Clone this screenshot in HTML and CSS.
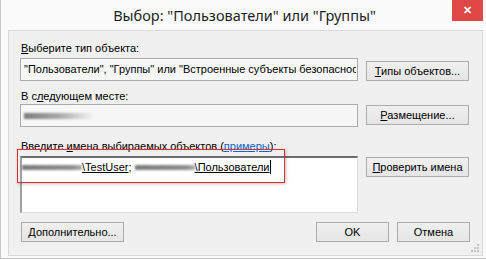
FILE: index.html
```html
<!DOCTYPE html>
<html lang="ru">
<head>
    <meta charset="UTF-8">
    <title>Выбор: "Пользователи" или "Группы"</title>
    <link rel="stylesheet" href="styles.css">
</head>
<body>

    <!-- Window -->
    <div class="window">
        <div class="titlebar">
            <span class="title">Выбор: "Пользователи" или "Группы"</span>
            <span class="close">&#10005;</span>
        </div>

        <div class="panel">
            <!-- Object type -->
            <div class="label"><u>В</u>ыберите тип объекта:</div>
            <div class="row row-field">
                <div class="field"><span class="field-text">"Пользователи", "Группы" или "Встроенные субъекты безопасности"</span></div>
                <button class="btn btn-side"><u>Т</u>ипы объектов...</button>
            </div>

            <!-- Location -->
            <div class="label label-loc">В с<u>л</u>едующем месте:</div>
            <div class="row row-field row-loc">
                <div class="field"><span class="smudge smudge-loc"></span></div>
                <button class="btn btn-side btn-loc"><u>Р</u>азмещение...</button>
            </div>

            <!-- Names -->
            <div class="label label-names">Введите <u>и</u>мена выбираемых объектов (<a href="#">примеры</a>):</div>
            <div class="row row-names">
                <div class="names">
                    <div class="names-line">
                        <span class="resolved"><span class="smudge"></span>\TestUser</span>; <span class="resolved"><span class="smudge"></span>\Пользователи</span><span class="caret"></span>
                    </div>
                </div>
                <button class="btn btn-side btn-check"><u>П</u>роверить имена</button>
            </div>

            <!-- Bottom buttons -->
            <div class="row row-bottom">
                <button class="btn btn-more"><u>Д</u>ополнительно...</button>
                <div class="spacer"></div>
                <button class="btn btn-ok">OK</button>
                <button class="btn btn-ok">Отмена</button>
            </div>

            <div class="highlight"></div>

            <svg class="grip" width="9" height="9" viewBox="0 0 9 9">
                <rect x="7" y="1" width="2" height="2" fill="#c4c4c4"/>
                <rect x="4" y="4" width="2" height="2" fill="#c4c4c4"/>
                <rect x="7" y="4" width="2" height="2" fill="#c4c4c4"/>
                <rect x="1" y="7" width="2" height="2" fill="#c4c4c4"/>
                <rect x="4" y="7" width="2" height="2" fill="#c4c4c4"/>
                <rect x="7" y="7" width="2" height="2" fill="#c4c4c4"/>
            </svg>
        </div>
    </div>

</body>
</html>
```

FILE: styles.css
```css
/* Reset */
* {
    margin: 0;
    padding: 0;
    box-sizing: border-box;
}

body {
    width: 486px;
    height: 259px;
    overflow: hidden;
    background: #fafafa;
    font-family: 'Liberation Sans', Arial, sans-serif;
    font-size: 11px;
    color: #000;
}

/* Window frame */
.window {
    width: 486px;
    height: 259px;
    border-left: 1px solid #c6c6c6;
    border-bottom: 1px solid #c6c6c6;
    background: #fafafa;
    display: flex;
    flex-direction: column;
}

.titlebar {
    position: relative;
    height: 30px;
    display: flex;
    align-items: center;
    justify-content: center;
    padding-left: 2px;
}

.title {
    font-family: 'Noto Sans', sans-serif;
    font-size: 14.5px;
    color: #1e1e1e;
    margin-top: -1px;
}

.close {
    position: absolute;
    top: 0;
    right: 3px;
    width: 31px;
    height: 21px;
    background: #e04848;
    color: #fff;
    font-size: 11px;
    font-weight: bold;
    display: flex;
    align-items: center;
    justify-content: center;
}

/* Client area */
.panel {
    position: relative;
    margin: 0 3px 2px 7px;
    flex: 1;
    background: #f0f0f0;
    border: 1px solid #d9d9d9;
    padding: 10px 12px 0 11px;
}

.label {
    height: 14px;
    line-height: 14px;
    padding-left: 1px;
}

.label-loc {
    margin-top: 8px;
}

.label-names {
    margin-top: 12px;
}

.label a {
    color: #0066cc;
    text-decoration: underline;
}

.row {
    display: flex;
    align-items: flex-start;
}

.row-field {
    margin-top: 3px;
}

.row-loc {
    margin-top: 1px;
}

.field {
    width: 338px;
    height: 23px;
    border: 1px solid #ababab;
    background: #f7f7f7;
    padding: 4px 0 0 3px;
    overflow: hidden;
}

.field-text {
    display: block;
    width: 332px;
    white-space: nowrap;
    overflow: hidden;
}

.btn {
    height: 20px;
    border: 1px solid #acacac;
    background: linear-gradient(#f0f0f0, #e5e5e5);
    font-family: 'Liberation Sans', Arial, sans-serif;
    font-size: 11px;
    color: #000;
    line-height: 18px;
}

.btn-side {
    width: 103px;
    margin-left: 8px;
    margin-top: 3px;
}

.btn-loc {
    margin-top: 1px;
}

/* Names box */
.row-names {
    margin-top: 3px;
}

.names {
    width: 338px;
    height: 57px;
    background: #fff;
    border-top: 2px solid #6e6e6e;
    border-left: 2px solid #a0a0a0;
    border-right: 1px solid #dcdcdc;
    border-bottom: 1px solid #dcdcdc;
    padding: 2px 0 0 0;
}

.names-line {
    display: flex;
    align-items: center;
    height: 14px;
    white-space: pre;
}

.resolved {
    display: inline-flex;
    align-items: center;
    text-decoration: underline;
}

.caret {
    display: inline-block;
    width: 1px;
    height: 14px;
    background: #000;
    margin-left: 1px;
}

.smudge {
    display: inline-block;
    width: 60px;
    height: 5px;
    background: linear-gradient(to right, #7a7a7a 0%, #8e8e8e 85%, #b0b0b0 100%);
    filter: blur(1px);
}

.smudge-loc {
    width: 70px;
    height: 6px;
    margin-top: 3px;
    background: linear-gradient(to right, #7c7c7c 0%, #a8a8a8 50%, rgba(230, 230, 230, 0) 100%);
}

.btn-check {
    margin-top: 1px;
}

/* Bottom buttons */
.row-bottom {
    margin-top: 9px;
    align-items: center;
    padding-left: 1px;
}

.btn-more {
    width: 103px;
}

.spacer {
    flex: 1;
}

.btn-ok {
    width: 73px;
    margin-left: 8px;
}

/* Red frame drawn over the names */
.highlight {
    position: absolute;
    left: 8px;
    top: 118px;
    width: 268px;
    height: 34px;
    border: 1px solid #e42a2a;
    box-shadow: 1px 1px 3px rgba(0, 0, 0, 0.25);
}

.grip {
    position: absolute;
    right: 3px;
    bottom: 3px;
}
```
